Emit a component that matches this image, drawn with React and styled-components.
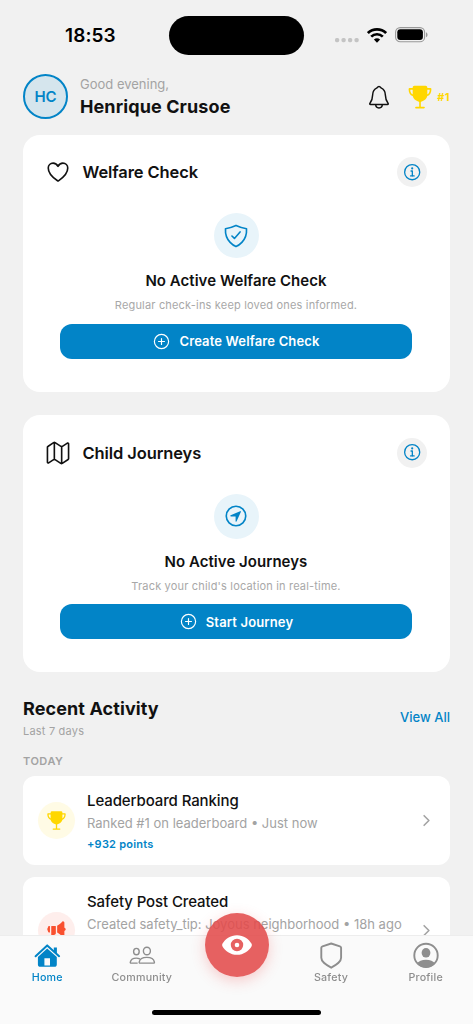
import React from 'react';
import styled, { createGlobalStyle } from 'styled-components';
import {
  IoAddCircleOutline,
  IoChevronForward,
  IoHeartOutline,
  IoInformationCircleOutline,
  IoMapOutline,
  IoMegaphone,
  IoNavigateCircleOutline,
  IoShieldCheckmarkOutline,
  IoTrophy,
} from 'react-icons/io5';

const GlobalStyle = createGlobalStyle`
  * {
    box-sizing: border-box;
  }

  body {
    margin: 0;
    background: #f1f1f1;
    font-family: Inter, 'Liberation Sans', sans-serif;
    color: #111;
  }

  svg {
    display: block;
    flex-shrink: 0;
  }
`;

const Screen = styled.div`
  position: relative;
  width: 473px;
  height: 1024px;
  overflow: hidden;
  background: #f1f1f1;
`;

const StatusBar = styled.div`
  display: grid;
  grid-template-columns: 169px 135px 1fr;
  align-items: center;
  height: 74px;
  padding-bottom: 4px;
`;

const Clock = styled.div`
  padding-left: 65px;
  font-size: 19px;
  font-weight: 600;
  letter-spacing: 0.1px;
  color: #000;
`;

const Island = styled.div`
  height: 39px;
  border-radius: 20px;
  background: #000;
`;

const StatusIcons = styled.div`
  display: flex;
  align-items: center;
  padding-left: 31px;
`;

const Header = styled.header`
  display: flex;
  align-items: center;
  height: 45px;
  padding: 0 23px;
`;

const Avatar = styled.div`
  display: flex;
  align-items: center;
  justify-content: center;
  width: 45px;
  height: 45px;
  border: 2px solid #0284c7;
  border-radius: 50%;
  background: #d5e5ed;
  color: #0284c7;
  font-size: 15px;
  font-weight: 600;
`;

const Greeting = styled.div`
  flex: 1;
  padding-left: 12px;
`;

const Hello = styled.div`
  font-size: 13px;
  line-height: 20px;
  color: #a3a3a3;
`;

const UserName = styled.div`
  font-size: 18px;
  font-weight: 700;
  line-height: 25px;
  letter-spacing: 0.1px;
`;

const Rank = styled.div`
  display: flex;
  align-items: center;
  gap: 4px;
  margin-left: 15px;
  color: #ffd700;
  font-size: 11px;
  font-weight: 700;
  letter-spacing: 0.4px;
`;

const Card = styled.section`
  height: 257px;
  margin: 16px 23px 0;
  padding: 21px 23px 0 22px;
  border-radius: 17px;
  background: #fff;

  & + & {
    margin-top: 23px;
    padding-top: 21.5px;
  }
`;

const CardHeader = styled.div`
  display: flex;
  align-items: center;
  height: 32px;
`;

const CardTitle = styled.h2`
  flex: 1;
  margin: 0;
  padding-left: 11.5px;
  font-size: 16.5px;
  font-weight: 600;
  letter-spacing: -0.1px;
`;

const InfoButton = styled.div`
  display: flex;
  align-items: center;
  justify-content: center;
  width: 30px;
  height: 30px;
  border-radius: 50%;
  background: #f1f1f1;
  color: #0284c7;
`;

const EmptyState = styled.div`
  display: flex;
  flex-direction: column;
  align-items: center;
  padding-top: 25px;
`;

const EmptyIcon = styled.div`
  display: flex;
  align-items: center;
  justify-content: center;
  width: 45px;
  height: 45px;
  border-radius: 50%;
  background: #e8f4fa;
  color: #0284c7;
`;

const EmptyTitle = styled.div`
  margin-top: 12px;
  font-size: 15px;
  font-weight: 600;
  line-height: 22px;
  letter-spacing: 0.04px;
`;

const EmptyText = styled.div`
  margin-top: 4px;
  font-size: 11px;
  line-height: 18px;
  letter-spacing: 0.18px;
  color: #a8a8a8;
`;

const ActionButton = styled.div`
  display: flex;
  align-items: center;
  justify-content: center;
  gap: 8px;
  width: 352px;
  height: 35px;
  margin-top: 9.5px;
  border-radius: 12px;
  background: #0284c7;
  color: #fff;
  font-size: 13px;
  font-weight: 600;
  letter-spacing: 0.15px;
`;

const ActivityHeader = styled.div`
  display: flex;
  align-items: center;
  justify-content: space-between;
  margin-top: 24px;
  padding: 0 23px;
`;

const ActivityTitle = styled.h2`
  margin: 0;
  font-size: 18px;
  font-weight: 700;
  line-height: 25px;
  letter-spacing: 0.1px;
`;

const ActivityRange = styled.div`
  font-size: 11px;
  line-height: 20px;
  letter-spacing: 0.2px;
  color: #a3a3a3;
`;

const ViewAll = styled.div`
  margin-top: -3px;
  color: #0284c7;
  font-size: 13px;
  font-weight: 500;
`;

const DayLabel = styled.div`
  margin: 12px 23px 6px;
  font-size: 11px;
  font-weight: 600;
  line-height: 17px;
  letter-spacing: 0.5px;
  color: #a3a3a3;
`;

const ActivityRow = styled.div`
  display: flex;
  align-items: center;
  height: ${({ $height }) => $height}px;
  margin: 0 23px 12px;
  padding: 0 15px;
  border-radius: 12px;
  background: #fff;
`;

const ActivityIcon = styled.div`
  display: flex;
  align-items: center;
  justify-content: center;
  width: 37px;
  height: 37px;
  border-radius: 50%;
  background: ${({ $tint }) => $tint};
  color: ${({ $color }) => $color};
`;

const ActivityBody = styled.div`
  flex: 1;
  align-self: flex-start;
  padding: 12.5px 0 0 12px;
  white-space: nowrap;
`;

const ActivityName = styled.div`
  font-size: 15px;
  font-weight: 500;
  line-height: 23px;
  letter-spacing: -0.1px;
`;

const ActivityText = styled.div`
  font-size: 13px;
  line-height: 22px;
  color: #a3a3a3;
`;

const Points = styled.div`
  font-size: 11px;
  font-weight: 600;
  line-height: 20px;
  letter-spacing: 0.22px;
  color: #0284c7;
`;

const TabBar = styled.nav`
  position: absolute;
  left: 0;
  right: 0;
  bottom: 0;
  display: grid;
  grid-template-columns: repeat(5, 1fr);
  height: 89px;
  padding-top: 5px;
  border-top: 1px solid #ededed;
  background: rgba(250, 250, 250, 0.94);
  backdrop-filter: blur(20px);
`;

const Tab = styled.div`
  display: flex;
  flex-direction: column;
  align-items: center;
  gap: 1px;
  color: ${({ $active }) => ($active ? '#0284c7' : '#8e8e8e')};
  font-size: 10.7px;
  font-weight: 500;
  line-height: 16px;
  letter-spacing: 0.2px;
`;

const WatchButton = styled.div`
  position: absolute;
  left: 204.5px;
  bottom: 47px;
  display: flex;
  align-items: center;
  justify-content: center;
  width: 64px;
  height: 64px;
  border-radius: 50%;
  background: rgba(226, 75, 75, 0.88);
  box-shadow: 0 4px 14px rgba(239, 68, 68, 0.25);
  color: #fff;
`;

const HomeIndicator = styled.div`
  position: absolute;
  left: 152px;
  bottom: 9px;
  width: 169px;
  height: 5px;
  border-radius: 3px;
  background: #000;
`;

const DotsSvg = styled.svg`
  margin-top: 10px;
`;

const StatusSvg = styled.svg`
  margin-left: 8px;
`;

const CellularDots = () => (
  <DotsSvg width="24" height="6" viewBox="0 0 24 6" fill="#c4c4c4">
    <rect x="0" y="1" width="4.2" height="4.2" rx="1.6" />
    <rect x="6.5" y="1" width="4.2" height="4.2" rx="1.6" />
    <rect x="13" y="1" width="4.2" height="4.2" rx="1.6" />
    <rect x="19.5" y="1" width="4.2" height="4.2" rx="1.6" />
  </DotsSvg>
);

const WifiGlyph = () => (
  <StatusSvg width="20" height="15" viewBox="0 0 20 15">
    <g fill="none" stroke="#000" strokeWidth="2.7">
      <path d="M.9 5.1a13 13 0 0 1 18.2 0" />
      <path d="M4.2 8.6a8.3 8.3 0 0 1 11.6 0" />
    </g>
    <path d="M10 14.7 6.9 11.6a4.5 4.5 0 0 1 6.2 0Z" fill="#000" />
  </StatusSvg>
);

const BatteryGlyph = () => (
  <StatusSvg width="34" height="16" viewBox="0 0 34 16">
    <rect x=".6" y=".6" width="29" height="14.2" rx="4.6" fill="none" stroke="#999" strokeWidth="1.1" />
    <rect x="2.3" y="2.3" width="25.6" height="10.8" rx="3" fill="#000" />
    <path d="M31 5.2c2 .7 2 4.3 0 5Z" fill="#999" />
  </StatusSvg>
);

const BellGlyph = () => (
  <svg width="26" height="26" viewBox="0 0 26 26" fill="none" stroke="currentColor" strokeWidth="1.5" strokeLinejoin="round">
    <path d="M13 2.4c-1.2 0-1.6.9-2 1.5C8.200 5 6.7 7.8 6.600 11.200c-.1 4-1 6-2.600 8-.5.7-.2 1.200.5 1.200h17c.7 0 1-.5.5-1.200-1.600-2-2.500-4-2.600-8-.1-3.400-1.600-6.200-4.400-7.300-.4-.6-.8-1.500-2-1.500Z" />
    <path d="M9.700 20.600a3.300 3.300 0 0 0 6.600 0" />
  </svg>
);

const HomeGlyph = () => (
  <svg width="28" height="28" viewBox="0 0 28 28" fill="currentColor">
    <path d="M2.6 15.2 14.2 4.4l11.9 10.8" fill="none" stroke="currentColor" strokeWidth="2" strokeLinecap="round" strokeLinejoin="round" />
    <path d="M20.8 6.4h3.1v6.8l-3.1-2.8Z" />
    <path
      fillRule="evenodd"
      d="M14.2 7.6 4.9 16.1v7.4c0 1.4.9 2.3 2.3 2.3h14.3c1.4 0 2.3-.9 2.3-2.3v-7.4ZM11.4 17.2H17v7.2h-5.6Z"
    />
  </svg>
);

const PeopleGlyph = () => (
  <svg width="28" height="28" viewBox="0 0 28 28" fill="none" stroke="currentColor" strokeWidth="1.4" strokeLinejoin="round" strokeLinecap="round">
    <ellipse cx="8.4" cy="10.6" rx="2.8" ry="3.2" />
    <ellipse cx="18.9" cy="10" rx="3.5" ry="3.8" />
    <path d="M12 22.1c-.7 0-.9-.4-.8-1 .5-2.8 3.6-4.7 7.6-4.7s7.1 1.9 7.6 4.7c.1.6-.1 1-.8 1Z" />
    <path d="M9.2 22.1H3.1c-.7 0-1-.4-.8-1.1.6-2.3 3-3.9 6-3.9 1.3 0 2.4.2 3.3.7" />
  </svg>
);

const ShieldGlyph = () => (
  <svg width="28" height="28" viewBox="0 0 28 28" fill="none" stroke="currentColor" strokeWidth="1.9" strokeLinejoin="round">
    <path d="M14.2 2.5 22.9 5.3c.8.3 1.2.7 1.2 1.5v10c0 4.2-4.2 6.8-9.9 9.9-5.7-3.1-9.9-5.7-9.9-9.9v-10c0-.8.4-1.2 1.2-1.5Z" />
  </svg>
);

const ProfileGlyph = () => (
  <svg width="28" height="28" viewBox="0 0 28 28" fill="currentColor">
    <circle cx="14" cy="14.4" r="11.7" fill="none" stroke="currentColor" strokeWidth="1.9" />
    <ellipse cx="14" cy="11.8" rx="4.4" ry="4.8" />
    <path d="M4.8 22.4c1.8-2.3 5.1-3.7 9.2-3.7s7.4 1.4 9.2 3.7A11.7 11.7 0 0 1 14 26.4a11.7 11.7 0 0 1-9.2-4Z" />
  </svg>
);

const EyeGlyph = () => (
  <svg width="30" height="20" viewBox="0 0 30 20" fill="currentColor">
    <path
      fillRule="evenodd"
      d="M15 .2C8.5.2 2.9 4.2.4 8.8c-.4.8-.4 1.6 0 2.4C2.9 15.8 8.5 19.8 15 19.8s12.1-4 14.6-8.6c.4-.8.4-1.6 0-2.4C27.1 4.2 21.5.2 15 .2ZM15 3.8a6.2 6.2 0 1 1 0 12.4a6.2 6.2 0 0 1 0-12.4Z"
    />
    <circle cx="15" cy="10" r="2.3" />
  </svg>
);

const sections = [
  {
    title: 'Welfare Check',
    icon: IoHeartOutline,
    emptyIcon: IoShieldCheckmarkOutline,
    heading: 'No Active Welfare Check',
    text: 'Regular check-ins keep loved ones informed.',
    action: 'Create Welfare Check',
  },
  {
    title: 'Child Journeys',
    icon: IoMapOutline,
    emptyIcon: IoNavigateCircleOutline,
    heading: 'No Active Journeys',
    text: "Track your child's location in real-time.",
    action: 'Start Journey',
  },
];

const activities = [
  {
    name: 'Leaderboard Ranking',
    text: 'Ranked #1 on leaderboard • Just now',
    points: '+932 points',
    icon: IoTrophy,
    color: '#ffd700',
    tint: '#fffbe5',
    height: 89,
  },
  {
    name: 'Safety Post Created',
    text: 'Created safety_tip: Joyous neighborhood • 18h ago',
    icon: IoMegaphone,
    color: '#f9502f',
    tint: '#feeeec',
    height: 107,
  },
];

const App = () => {
  return (
    <>
      <GlobalStyle />
      <Screen>
        <StatusBar>
          <Clock>18:53</Clock>
          <Island />
          <StatusIcons>
            <CellularDots />
            <WifiGlyph />
            <BatteryGlyph />
          </StatusIcons>
        </StatusBar>

        <Header>
          <Avatar>HC</Avatar>
          <Greeting>
            <Hello>Good evening,</Hello>
            <UserName>Henrique Crusoe</UserName>
          </Greeting>
          <BellGlyph />
          <Rank>
            <IoTrophy size={26} />
            #1
          </Rank>
        </Header>

        {sections.map(({ title, icon: Icon, emptyIcon: EmptyGlyph, heading, text, action }) => (
          <Card key={title}>
            <CardHeader>
              <Icon size={26} />
              <CardTitle>{title}</CardTitle>
              <InfoButton>
                <IoInformationCircleOutline size={21} />
              </InfoButton>
            </CardHeader>
            <EmptyState>
              <EmptyIcon>
                <EmptyGlyph size={26} />
              </EmptyIcon>
              <EmptyTitle>{heading}</EmptyTitle>
              <EmptyText>{text}</EmptyText>
              <ActionButton>
                <IoAddCircleOutline size={19} />
                {action}
              </ActionButton>
            </EmptyState>
          </Card>
        ))}

        <ActivityHeader>
          <div>
            <ActivityTitle>Recent Activity</ActivityTitle>
            <ActivityRange>Last 7 days</ActivityRange>
          </div>
          <ViewAll>View All</ViewAll>
        </ActivityHeader>
        <DayLabel>TODAY</DayLabel>
        {activities.map(({ name, text, points, icon: Icon, color, tint, height }) => (
          <ActivityRow key={name} $height={height}>
            <ActivityIcon $tint={tint} $color={color}>
              <Icon size={21} />
            </ActivityIcon>
            <ActivityBody>
              <ActivityName>{name}</ActivityName>
              <ActivityText>{text}</ActivityText>
              {points && <Points>{points}</Points>}
            </ActivityBody>
            <IoChevronForward size={17} color="#a3a3a3" />
          </ActivityRow>
        ))}

        <TabBar>
          <Tab $active>
            <HomeGlyph />
            Home
          </Tab>
          <Tab>
            <PeopleGlyph />
            Community
          </Tab>
          <span />
          <Tab>
            <ShieldGlyph />
            Safety
          </Tab>
          <Tab>
            <ProfileGlyph />
            Profile
          </Tab>
        </TabBar>
        <WatchButton>
          <EyeGlyph />
        </WatchButton>
        <HomeIndicator />
      </Screen>
    </>
  );
};

export default App;
